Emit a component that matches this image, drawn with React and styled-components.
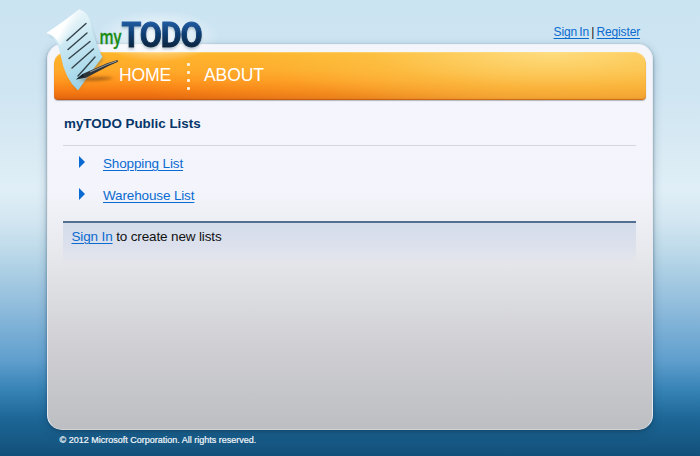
import React from "react";
import styled, { createGlobalStyle } from "styled-components";

const GlobalStyle = createGlobalStyle`
  * { box-sizing: border-box; }
  body {
    margin: 0;
    overflow: hidden;
    font-family: "Liberation Sans", Arial, sans-serif;
    color: #111;
  }
`;

const Page = styled.div`
  height: 456px;
  padding: 0 47px;
  display: flex;
  flex-direction: column;
  position: relative;
  background: linear-gradient(
    #cbe4f2 0, #cfe5f2 90px, #d7e9f3 140px, #e0eff7 190px, #d2e6f1 222px,
    #bcd9e9 252px, #91bddc 305px, #609fce 360px, #3683b5 390px,
    #1c6595 420px, #175a86 440px, #11507a 456px
  );
`;

const Account = styled.div`
  height: 44px;
  padding: 25px 13px 0 0;
  text-align: right;
  font-size: 12px;
  letter-spacing: -0.15px;
  word-spacing: -0.9px;
  line-height: 14px;
`;

const Link = styled.a`
  color: #0a6bd0;
  text-decoration: underline;
  text-decoration-thickness: 1px;
  text-underline-offset: 1.5px;
`;

const Panel = styled.main`
  width: 606px;
  height: 386px;
  padding: 8px 7px 0;
  border: 1px solid;
  border-color: #eef1f7 #e6eaf0 #d5d4d5 #e6eaf0;
  border-radius: 15px;
  background: linear-gradient(#f4f6fc 0, #f4f5fc 145px, #e8e9ed 205px, #cfcfd4 300px, #bdbec2 385px);
  box-shadow: 0 1px 3px rgba(15, 45, 70, 0.4), 0 3px 10px rgba(20, 60, 90, 0.3);
`;

const Nav = styled.nav`
  height: 48px;
  display: flex;
  align-items: center;
  margin: -1px 0 0 -1px;
  width: 592px;
  padding: 0 0 2px 65px;
  border-radius: 12px 12px 4px 4px;
  color: #fff;
  font-size: 17.6px;
  letter-spacing: -0.15px;
  line-height: 20px;
  background:
    radial-gradient(ellipse 300px 60px at 84% 0, rgba(255, 226, 140, 0.85), rgba(255, 205, 90, 0.35) 60%, rgba(255, 200, 80, 0)),
    linear-gradient(90deg, rgba(245, 190, 60, 0) 15%, rgba(245, 190, 60, 0.55) 75%, rgba(245, 190, 60, 0.6)),
    linear-gradient(#ffb52b 0, #ffa929 18px, #ff961e 29px, #f67c12 39px, #e4650f 47px);
  box-shadow: inset 0 -1px 1px rgba(180, 75, 5, 0.65), inset 0 1px 1px rgba(255, 226, 143, 0.55), 0 1px 1px rgba(60, 55, 70, 0.35);
`;

const NavItem = styled.span`
  width: ${(p) => p.$width}px;
  white-space: nowrap;
`;

const Dots = styled.span`
  display: grid;
  gap: 5px;
  width: 3px;
  margin: 2px 14px 0 16px;
`;

const Dot = styled.i`
  width: 3px;
  height: 3px;
  border-radius: 1px;
  background: #fff3df;
`;

const Content = styled.section`
  width: 573px;
  margin-left: 8px;
`;

const Title = styled.h1`
  margin: 0;
  height: 46px;
  padding: 16px 0 0 1px;
  border-bottom: 1px solid #d5d7de;
  color: #073569;
  font-size: 13.4px;
  line-height: 16px;
`;

const Lists = styled.ul`
  list-style: none;
  height: 75px;
  margin: 0;
  padding: 2px 0 0 15px;
`;

const ListRow = styled.li`
  height: 32px;
  display: flex;
  align-items: center;
  padding-bottom: 1px;
  font-size: 13.5px;
  letter-spacing: -0.14px;
`;

const Arrow = styled.svg`
  width: 7px;
  height: 12px;
  margin: -3px 17px 0 1px;
`;

const Prompt = styled.div`
  height: 45px;
  padding: 6px 8px 6px 8.5px;
  border-top: 2px solid #537092;
  font-size: 13.5px;
  letter-spacing: -0.14px;
  line-height: 16px;
  background: linear-gradient(#d5ddea, #dbe0ec 50%, rgba(225, 228, 238, 0));
`;

const Footer = styled.footer`
  padding: 5px 0 0 12.5px;
  color: #f1f7fb;
  font-size: 9px;
  -webkit-text-stroke: 0.2px #f1f7fb;
  line-height: 11px;
`;

const Logo = styled.svg`
  position: absolute;
  left: 40px;
  top: 0;
  width: 180px;
  height: 100px;
`;

const MyTodoLogo = () => (
  <Logo viewBox="40 0 180 100" role="img" aria-label="myTODO">
    <defs>
      <linearGradient id="word" x1="0" y1="21" x2="0" y2="48" gradientUnits="userSpaceOnUse">
        <stop stopColor="#235da4" />
        <stop offset=".5" stopColor="#0d3c70" />
        <stop offset="1" stopColor="#06243d" />
      </linearGradient>
      <linearGradient id="paper" x1="55" y1="15" x2="88" y2="92" gradientUnits="userSpaceOnUse">
        <stop stopColor="#f4fbfd" />
        <stop offset=".35" stopColor="#cde9f3" />
        <stop offset=".7" stopColor="#b0dcec" />
        <stop offset="1" stopColor="#8fcde2" />
      </linearGradient>
      <linearGradient id="fold" x1="52" y1="24" x2="76" y2="38" gradientUnits="userSpaceOnUse">
        <stop stopColor="#ffffff" />
        <stop offset=".4" stopColor="#ffffff" />
        <stop offset="1" stopColor="#d0e9f2" stopOpacity="0" />
      </linearGradient>
      <radialGradient id="halo">
        <stop stopColor="#fff" stopOpacity=".8" />
        <stop offset=".6" stopColor="#fff" stopOpacity=".35" />
        <stop offset="1" stopColor="#fff" stopOpacity="0" />
      </radialGradient>
      <filter id="soft" x="-30%" y="-80%" width="160%" height="260%">
        <feGaussianBlur stdDeviation="1.5" />
      </filter>
      <filter id="drop" x="-10%" y="-20%" width="120%" height="150%">
        <feDropShadow dx="0" dy="2" stdDeviation="1" floodColor="#557386" floodOpacity=".35" />
      </filter>
    </defs>
    <ellipse cx="158" cy="36" rx="61" ry="26" fill="url(#halo)" />
    <path d="M49 37Q60 35 62 50Q66 77 77 90L103 60L87 17Z" fill="#244c62" opacity=".28" filter="url(#soft)" />
    <path d="M46.500 33Q62 23 79 9.500Q89 12 91 24Q95 43 102.500 57Q91 72 78 90.500Q65 79 61 57Q57 36 46.500 33Z" fill="url(#paper)" />
    <path d="M46.500 33Q62 23 79 9.500Q89 12 91 24Q75 23 60 46Q56 35 46.500 33Z" fill="url(#fold)" />
    <g stroke="#34434b" strokeWidth="1.400" strokeLinecap="round">
      <path d="M67 40.500L86 23.500M68 49.500L87 33M69 58.500L90 41.500M72 68L93.500 49" />
      <path d="M78 76L95 57" />
    </g>
    <path d="M78 80Q97 75 114 78Q99 82 78 80Z" fill="#763c10" opacity=".65" filter="url(#soft)" />
    <path d="M76 79.500L83 73.800L107 63.200L117.500 60L118 61.800L108 66.200L86 77.800Z" fill="#303438" />
    <path d="M90 72L107 64.500L116.500 61.200" fill="none" stroke="#aeb4b6" strokeWidth=".8" />
    <path d="M76 79.500L83 73.800L84 76.500Z" fill="#142029" />
    <text x="99.500" y="44" textLength="22" lengthAdjust="spacingAndGlyphs" fill="#198b12" stroke="#198b12" strokeWidth=".3" fontFamily="Open Sans, sans-serif" fontWeight="600" fontSize="19">my</text>
    <text x="121.500" y="46.800" letterSpacing="-1.2" textLength="80" lengthAdjust="spacingAndGlyphs" fill="url(#word)" stroke="url(#word)" strokeWidth=".9" filter="url(#drop)" fontFamily="Roboto, sans-serif" fontWeight="700" fontSize="34.500">TODO</text>
  </Logo>
);

const ListEntry = ({ children }) => (
  <ListRow>
    <Arrow viewBox="0 0 7 12" aria-hidden="true"><path d="M0 0L6 6L0 12Z" fill="#0969d2" /></Arrow>
    <Link>{children}</Link>
  </ListRow>
);

export default function App() {
  return (
    <Page>
      <GlobalStyle />
      <Account><Link>Sign In</Link> | <Link>Register</Link></Account>
      <Panel>
        <Nav>
          <NavItem $width={52}>HOME</NavItem>
          <Dots><Dot /><Dot /><Dot /><Dot /></Dots>
          <NavItem $width={60}>ABOUT</NavItem>
        </Nav>
        <Content>
          <Title>myTODO Public Lists</Title>
          <Lists>
            <ListEntry>Shopping List</ListEntry>
            <ListEntry>Warehouse List</ListEntry>
          </Lists>
          <Prompt><Link>Sign In</Link> to create new lists</Prompt>
        </Content>
      </Panel>
      <Footer>© 2012 Microsoft Corporation. All rights reserved.</Footer>
      <MyTodoLogo />
    </Page>
  );
}
